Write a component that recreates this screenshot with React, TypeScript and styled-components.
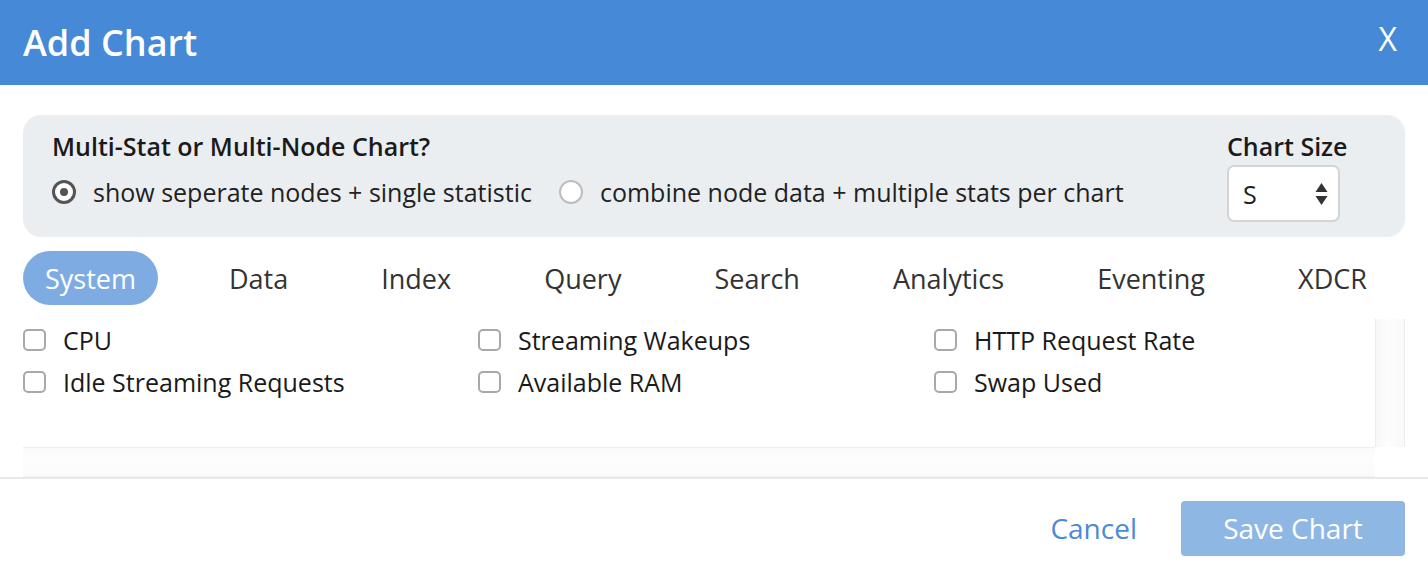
import React, { useState } from "react";
import styled, { createGlobalStyle } from "styled-components";

const GlobalStyle = createGlobalStyle`
  html, body { margin: 0; padding: 0; background: #fff; }
  body { font-family: "Open Sans", "Noto Sans", sans-serif; color: #222; }
  * { box-sizing: border-box; }
`;

const Dialog = styled.div`
  width: 1428px;
  height: 573px;
  display: flex;
  flex-direction: column;
  background: #fff;
`;

const Header = styled.header`
  height: 85px;
  flex: none;
  background: #4689d7;
  display: flex;
  align-items: center;
  justify-content: space-between;
  padding: 0 31px 0 23px;
  color: #fff;
`;

const Title = styled.h1`
  margin: 0;
  font-size: 36px;
  font-weight: 600;
  letter-spacing: 0;
`;

const CloseButton = styled.button`
  border: 0;
  background: none;
  color: #fff;
  font-family: inherit;
  font-size: 32px;
  font-weight: 400;
  padding: 0;
  margin-top: -8px;
  cursor: pointer;
`;

const Body = styled.div`
  flex: 1;
  padding: 30px 23px 0;
  display: flex;
  flex-direction: column;
`;

const OptionsPanel = styled.div`
  height: 122px;
  background: #ebeef1;
  border-radius: 18px;
  display: flex;
  justify-content: space-between;
  padding: 15px 58px 15px 29px;
`;

const OptionsColumn = styled.div`
  display: flex;
  flex-direction: column;
`;

const Label = styled.div`
  font-size: 25px;
  font-weight: 600;
  line-height: 32px;
  color: #1a1a1a;
  white-space: nowrap;
`;

const RadioRow = styled.div`
  display: flex;
  align-items: center;
  margin-top: 14px;
`;

const RadioOption = styled.label`
  display: flex;
  align-items: center;
  font-size: 25px;
  line-height: 32px;
  margin-right: 27px;
  white-space: nowrap;
  cursor: pointer;
`;

const RadioCircle = styled.span<{ $checked: boolean }>`
  width: 24px;
  height: 24px;
  border-radius: 50%;
  border: ${(p) => (p.$checked ? "3px solid #555" : "2px solid #bdbdbd")};
  background: #fff;
  display: inline-flex;
  align-items: center;
  justify-content: center;
  margin-right: 17px;
  flex: none;
  &::after {
    content: "";
    width: 8px;
    height: 8px;
    border-radius: 50%;
    background: ${(p) => (p.$checked ? "#555" : "transparent")};
  }
`;

const SizeColumn = styled.div`
  display: flex;
  flex-direction: column;
  width: 120px;
`;

const SelectBox = styled.div`
  margin-top: 3px;
  width: 113px;
  height: 57px;
  border: 2px solid #d4d4d4;
  border-radius: 7px;
  background: #fff;
  display: flex;
  align-items: center;
  justify-content: space-between;
  padding: 0 10px 0 14px;
  font-size: 25px;
`;

const Tabs = styled.nav`
  display: flex;
  gap: 49px;
  margin-top: 14px;
`;

const Tab = styled.button<{ $active?: boolean }>`
  height: 54px;
  border: 0;
  border-radius: 27px;
  padding: 0 22px;
  font-family: inherit;
  font-size: 27px;
  background: ${(p) => (p.$active ? "#7eace2" : "transparent")};
  color: ${(p) => (p.$active ? "#fff" : "#333")};
  cursor: pointer;
`;

const ScrollFrame = styled.div`
  margin-top: 14px;
  height: 158px;
  display: grid;
  grid-template-columns: minmax(0, 1fr) 30px;
  grid-template-rows: 128px 30px;
`;

const StatsGrid = styled.div`
  display: grid;
  grid-template-columns: 455px 456px minmax(0, 1fr);
  grid-auto-rows: 42px;
  align-content: start;
  min-width: 0;
`;

const VTrack = styled.div`
  border-left: 1px solid #ececec;
  border-right: 1px solid #ececec;
  background: linear-gradient(to right, #f7f7f7, #fdfdfd 40%, #f9f9f9);
`;

const HTrack = styled.div`
  border-top: 1px solid #efefef;
  border-bottom: 1px solid #f2f2f2;
  background: linear-gradient(to bottom, #fafafa, #fdfdfd 40%, #fbfbfb);
`;

const StatOption = styled.label`
  display: flex;
  align-items: center;
  font-size: 25px;
  color: #1a1a1a;
  white-space: nowrap;
  cursor: pointer;
`;

const CheckBox = styled.span`
  width: 23px;
  height: 22px;
  border: 2px solid #a8a8a8;
  border-radius: 5px;
  background: #fff;
  margin-right: 17px;
  flex: none;
`;

const Divider = styled.div`
  height: 2px;
  background: #e8e8e8;
  flex: none;
`;

const Footer = styled.footer`
  flex: 1;
  display: flex;
  align-items: center;
  justify-content: flex-end;
  padding: 4px 23px 0 0;
  gap: 44px;
`;

const CancelButton = styled.button`
  border: 0;
  background: none;
  padding: 0;
  font-family: inherit;
  font-size: 28px;
  color: #4a8ad6;
  cursor: pointer;
`;

const SaveButton = styled.button`
  width: 224px;
  height: 55px;
  border: 0;
  border-radius: 4px;
  background: #8fb7e4;
  color: #fff;
  font-family: inherit;
  font-size: 28px;
  cursor: pointer;
`;

const tabs = ["System", "Data", "Index", "Query", "Search", "Analytics", "Eventing", "XDCR"];
const stats = [
  "CPU",
  "Streaming Wakeups",
  "HTTP Request Rate",
  "Idle Streaming Requests",
  "Available RAM",
  "Swap Used",
];

const SortArrows = () => (
  <svg width="13" height="26" viewBox="0 0 13 26">
    <path d="M6.5 2 L12.5 11 L0.5 11 Z" fill="#333" />
    <path d="M0.5 15 L12.5 15 L6.5 24 Z" fill="#333" />
  </svg>
);

export default function App() {
  const [mode, setMode] = useState(0);
  const [tab, setTab] = useState(0);
  return (
    <>
      <GlobalStyle />
      <Dialog>
        <Header>
          <Title>Add Chart</Title>
          <CloseButton>X</CloseButton>
        </Header>
        <Body>
          <OptionsPanel>
            <OptionsColumn>
              <Label>Multi-Stat or Multi-Node Chart?</Label>
              <RadioRow>
                <RadioOption onClick={() => setMode(0)}>
                  <RadioCircle $checked={mode === 0} />
                  show seperate nodes + single statistic
                </RadioOption>
                <RadioOption onClick={() => setMode(1)}>
                  <RadioCircle $checked={mode === 1} />
                  combine node data + multiple stats per chart
                </RadioOption>
              </RadioRow>
            </OptionsColumn>
            <SizeColumn>
              <Label>Chart Size</Label>
              <SelectBox>
                <span>S</span>
                <SortArrows />
              </SelectBox>
            </SizeColumn>
          </OptionsPanel>
          <Tabs>
            {tabs.map((t, i) => (
              <Tab key={t} $active={i === tab} onClick={() => setTab(i)}>
                {t}
              </Tab>
            ))}
          </Tabs>
          <ScrollFrame>
            <StatsGrid>
              {stats.map((s) => (
                <StatOption key={s}>
                  <CheckBox />
                  {s}
                </StatOption>
              ))}
            </StatsGrid>
            <VTrack />
            <HTrack />
            <div />
          </ScrollFrame>
        </Body>
        <Divider />
        <Footer>
          <CancelButton>Cancel</CancelButton>
          <SaveButton>Save Chart</SaveButton>
        </Footer>
      </Dialog>
    </>
  );
}
